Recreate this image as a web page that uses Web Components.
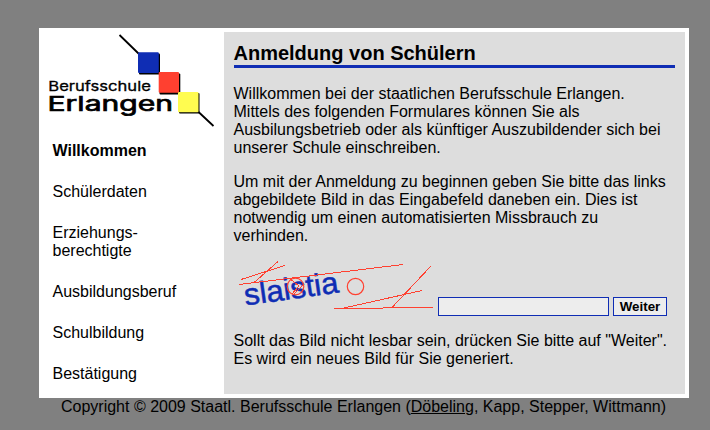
<!DOCTYPE html>
<html lang="de"><head><meta charset="utf-8"><title>Anmeldung von Schülern</title>
<style>
html{background:#808080}
body{margin:0;padding-top:28px;font:16px/18px "Liberation Sans",Arial,sans-serif;color:#000}
</style></head><body>
<registration-page></registration-page>
<script>
const define=(name,html)=>customElements.define(name,class extends HTMLElement{
  constructor(){super();this.attachShadow({mode:'open'}).innerHTML=html;}
});
define('school-logo',`<style>:host{display:block}svg{display:block}</style>
<svg width="185" height="104" viewBox="39 28 185 104" font-family="Inter,sans-serif">
<path d="M119.500 35L139 54M198 111.500L213.500 126" stroke="#000" stroke-width="1.800"/>
<g fill="#000"><rect x="139" y="53.500" width="21" height="21" rx="1"/><rect x="159.500" y="73.500" width="20.800" height="21" rx="1"/><rect x="179" y="93" width="20.500" height="20.500" rx="1"/></g>
<rect x="138" y="52.300" width="20.800" height="20.700" rx="1" fill="#0f2db4"/><rect x="158.700" y="72" width="20.300" height="20.700" rx="1" fill="#ff4030"/><rect x="178" y="92" width="20.500" height="20.300" rx="1" fill="#fffc50"/>
<text x="48.300" y="91" font-size="13" textLength="102.500" lengthAdjust="spacingAndGlyphs" stroke="#000" stroke-width=".3">Berufsschule</text>
<text x="47.500" y="111" font-size="20.500" font-weight="400" textLength="125.500" lengthAdjust="spacingAndGlyphs" stroke="#000" stroke-width=".7">Erlangen</text>
</svg>`);
define('nav-item',`<style>:host{display:block}:host([active]){font-weight:bold}</style><slot></slot>`);
define('side-nav',`<style>:host{display:flex;flex-direction:column;gap:23px;padding:10px 14px 0 13.500px}</style><slot></slot>`);
define('captcha-image',`<style>:host{display:block;width:200px;height:60px}svg{display:block}</style>
<svg width="200" height="60" viewBox="234 257 200 60" fill="none" stroke="#ff4030" stroke-width="1">
<text transform="translate(245.500 305.500) rotate(-8)" font-size="30.500" textLength="95" lengthAdjust="spacingAndGlyphs" fill="#0f2db4" stroke="#0f2db4" stroke-width=".5">slaistia</text>
<g shape-rendering="crispEdges"><path d="M239 284.500L403 264.500M241 279.500L285 265.500M253.500 283L278 261.500M334 308.500H383M383 307.500H433M344 308L422 290.500M392 307.500L431 266M289 278L299 286L292 294M294 294L304 284"/></g>
<g stroke-width="1.200"><circle cx="295.500" cy="286.500" r="8.300"/><circle cx="355.500" cy="286.500" r="8.200"/></g>
</svg>`);
define('captcha-form',`<style>:host{display:flex;align-items:flex-end;margin-top:12px;gap:4px}
input,button{box-sizing:border-box;height:19px;margin:0;border:1px solid #0f2db4;border-radius:0;background:#ededed;padding:0}
input{width:171px}button{width:54px;font:bold 13.333px/17px "Liberation Sans",Arial,sans-serif;color:#000}
div{display:flex;gap:4px;padding-bottom:1px}</style>
<captcha-image></captcha-image><div><input type="text" aria-label="Bildtext"><button>Weiter</button></div>`);
define('content-panel',`<style>:host{display:block;box-sizing:border-box;background:#ddd;padding:10px 10px 0;width:461px;height:362px}
h1{font-size:20px;line-height:23px;margin:0;border-bottom:3px solid #0f2db4}
h1 slot{display:block;margin-left:-.5px}
::slotted(p){margin:16px 0 0 -.5px;white-space:nowrap}::slotted(p:first-of-type){margin-top:17px}</style><h1><slot name="title"></slot></h1><slot></slot>`);
define('page-footer',`<style>:host{display:block;text-align:center;width:649px}a{color:inherit;text-decoration:underline}</style>Copyright © 2009 Staatl. Berufsschule Erlangen (<a href="#">Döbeling</a>, Kapp, Stepper, Wittmann)`);
define('registration-page',`<style>:host{display:block;margin-left:39px;width:650px}
main{display:grid;grid-template-columns:185px 461px;background:#fff;height:370px;box-sizing:border-box}
content-panel{margin-top:4px}captcha-form+p{margin-top:15px}</style>
<main><aside><school-logo></school-logo><side-nav><nav-item active>Willkommen</nav-item><nav-item>Schülerdaten</nav-item><nav-item>Erziehungs-<br>berechtigte</nav-item><nav-item>Ausbildungsberuf</nav-item><nav-item>Schulbildung</nav-item><nav-item>Bestätigung</nav-item></side-nav></aside>
<content-panel><span slot="title">Anmeldung von Schülern</span>
<p>Willkommen bei der staatlichen Berufsschule Erlangen.<br>Mittels des folgenden Formulares können Sie als<br>Ausbilungsbetrieb oder als künftiger Auszubildender sich bei<br>unserer Schule einschreiben.</p>
<p>Um mit der Anmeldung zu beginnen geben Sie bitte das links<br>abgebildete Bild in das Eingabefeld daneben ein. Dies ist<br>notwendig um einen automatisierten Missbrauch zu<br>verhinden.</p>
<captcha-form></captcha-form>
<p>Sollt das Bild nicht lesbar sein, drücken Sie bitte auf "Weiter".<br>Es wird ein neues Bild für Sie generiert.</p></content-panel></main>
<page-footer></page-footer>`);
</script></body></html>
